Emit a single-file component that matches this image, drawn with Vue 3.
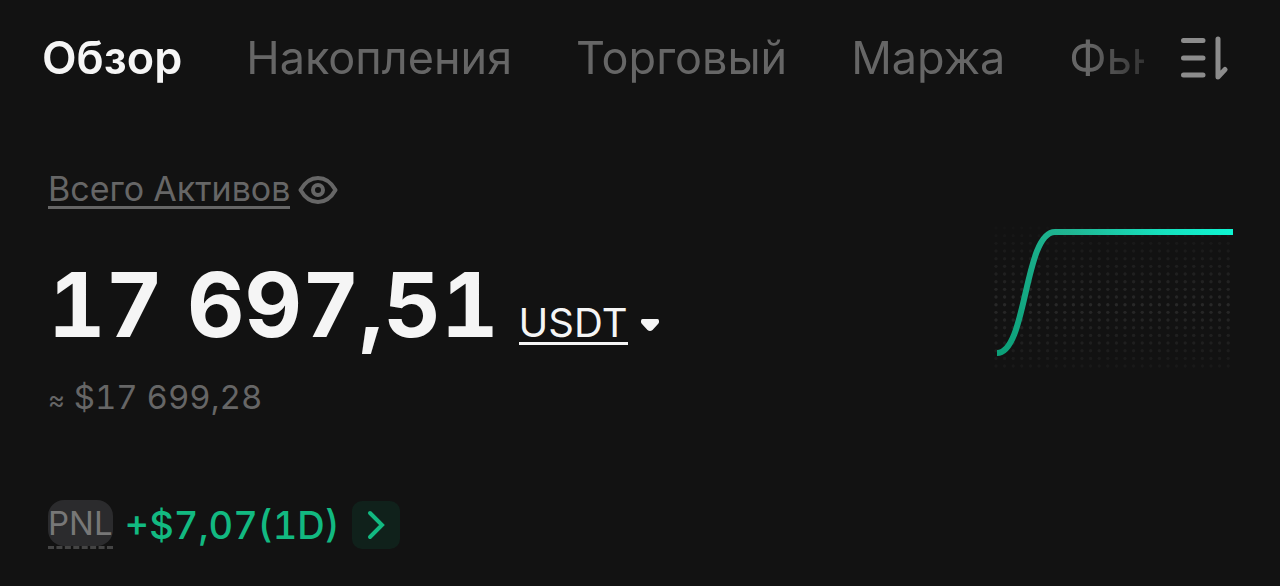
<template>
  <main class="assets">
    <header class="topbar">
      <nav class="tabs" aria-label="Разделы">
        <button v-for="tab in tabs" :key="tab" type="button" class="tab"
                :class="{ active: tab === activeTab }" @click="activeTab = tab">{{ tab }}</button>
      </nav>
      <button type="button" class="icon-btn" aria-label="Список разделов">
        <svg width="48" height="44" viewBox="0 0 48 44" fill="none" stroke="currentColor"
             stroke-width="5" stroke-linecap="round" stroke-linejoin="round">
          <path d="M3.5 4.5H23M3.5 22H23M3.5 39H23M38 3V41L45 33.500" />
        </svg>
      </button>
    </header>

    <section class="overview">
      <div class="balance">
        <div class="label-row">
          <a href="#total" class="total-label">Всего Активов</a>
          <button type="button" class="icon-btn" aria-label="Скрыть баланс">
            <svg width="40" height="30" viewBox="0 0 40 30" fill="none" stroke="currentColor" stroke-width="4">
              <path d="M2.500 14C7 6 13 2 20 2S33 6 37.500 14C33 22 27 26 20 26S7 22 2.500 14Z" stroke-linejoin="round" />
              <circle cx="20" cy="14" r="5" />
            </svg>
          </button>
        </div>
        <div class="amount-row">
          <strong class="amount">17 697,51</strong>
          <button type="button" class="currency">
            <span class="currency-name">USDT</span>
            <svg width="20" height="14" viewBox="0 0 20 14" fill="currentColor">
              <path d="M2.500 1H17.500Q19 1 19 3V4Q19 5 18 6L12.500 12Q10 14 7.500 12L2 6Q1 5 1 4V3Q1 1 2.500 1Z" />
            </svg>
          </button>
        </div>
        <div class="fiat"><span class="approx">≈</span> $17 699,28</div>
      </div>

      <svg class="chart" width="240" height="144" viewBox="0 0 240 144" fill="none" role="img" aria-label="График активов">
        <defs>
          <linearGradient id="line" gradientUnits="userSpaceOnUse" x1="4" y1="128" x2="240" y2="7">
            <stop offset="0" stop-color="#0b9f78" />
            <stop offset="0.45" stop-color="#20b592" />
            <stop offset="0.75" stop-color="#16dfbc" />
            <stop offset="1" stop-color="#0ff5d2" />
          </linearGradient>
        </defs>
        <g v-for="row in dotRows" :key="row.y" fill="#fff" :fill-opacity="row.opacity">
          <circle v-for="x in dotColumns" :key="x" :cx="x" :cy="row.y" r="1.7" />
        </g>
        <path d="M4 128C34 128 31 7 62 7H240" stroke="url(#line)" stroke-width="6" />
      </svg>
    </section>

    <div class="pnl-row">
      <span class="pnl-label"><span class="pnl-badge">PNL</span></span>
      <span class="pnl-value">+$7,07(1D)</span>
      <button type="button" class="pnl-more" aria-label="Подробнее">
        <svg width="20" height="30" viewBox="0 0 20 30" fill="none" stroke="currentColor"
             stroke-width="4" stroke-linecap="round">
          <path d="M4 3L16 15L4 27" />
        </svg>
      </button>
    </div>
  </main>
</template>

<script setup>
import { ref } from 'vue'

const tabs = ['Обзор', 'Накопления', 'Торговый', 'Маржа', 'Фьючерсы']
const activeTab = ref('Обзор')

const dotColumns = Array.from({ length: 28 }, (_, i) => 3 + i * 8.6)

// the grid fades out towards its top and bottom rows
const dotRows = Array.from({ length: 19 }, (_, i) => ({
  y: 3 + i * 7.67,
  opacity: 0.015 + 0.08 * (1 - Math.abs(i - 10) / 10),
}))
</script>

<style>
body {
  margin: 0;
  background: #121212;
}
</style>

<style scoped>
.assets {
  box-sizing: border-box;
  min-height: 100vh;
  padding: 28px 47px 36px 48px;
  background: #121212;
  color: #f5f5f5;
  font-family: Inter, "Liberation Sans", sans-serif;
  font-variant-numeric: tabular-nums;
}
button {
  padding: 0;
  border: 0;
  background: none;
  color: inherit;
  font: inherit;
  cursor: pointer;
}
svg {
  display: block;
}
.topbar {
  display: flex;
  align-items: center;
  gap: 36px;
  margin: 0 5px 0 -6px;
}
.tabs {
  display: flex;
  flex: 1;
  gap: 64px;
  min-width: 0;
  overflow: hidden;
  -webkit-mask-image: linear-gradient(to right, #000 calc(100% - 56px), rgba(0, 0, 0, .4));
  mask-image: linear-gradient(to right, #000 calc(100% - 56px), rgba(0, 0, 0, .4));
}
.tab {
  flex: none;
  color: #666;
  font-size: 45px;
  line-height: 60px;
  white-space: nowrap;
}
.tab.active {
  color: #f5f5f5;
  font-weight: 600;
}
.icon-btn {
  flex: none;
  color: #8c8c8c;
}
.overview {
  display: flex;
  justify-content: space-between;
  margin-top: 84px;
}
.label-row {
  display: flex;
  align-items: center;
  gap: 8px;
}
.label-row .icon-btn {
  color: #666;
}
.total-label {
  border-bottom: 3px solid #666;
  color: #666;
  font-size: 34px;
  line-height: 34px;
  text-decoration: none;
}
.amount-row {
  display: flex;
  align-items: baseline;
  gap: 20px;
  margin-top: 40px;
}
.amount {
  font-size: 89px;
  font-weight: 700;
  line-height: 112px;
}
.currency {
  display: flex;
  align-items: center;
  gap: 12px;
}
.currency-name {
  border-bottom: 3px solid currentColor;
  font-size: 40px;
  line-height: 38px;
}
.fiat {
  margin-top: 16px;
  color: #666;
  font-size: 33px;
  line-height: 40px;
}
.approx {
  font-size: 26px;
}
.chart {
  flex: none;
  margin-top: 53px;
}
.pnl-row {
  display: flex;
  align-items: center;
  gap: 12px;
  margin-top: 80px;
}
.pnl-label {
  border-bottom: 3px dashed #444;
}
.pnl-badge {
  display: block;
  border-radius: 16px;
  background: #2b2b2d;
  color: #777;
  font-size: 33px;
  line-height: 46px;
}
.pnl-value {
  color: #12b981;
  font-size: 38px;
  font-weight: 500;
  line-height: 48px;
}
.pnl-more {
  display: flex;
  align-items: center;
  justify-content: center;
  width: 48px;
  height: 48px;
  border-radius: 10px;
  background: #10211b;
  color: #12b981;
}
</style>
